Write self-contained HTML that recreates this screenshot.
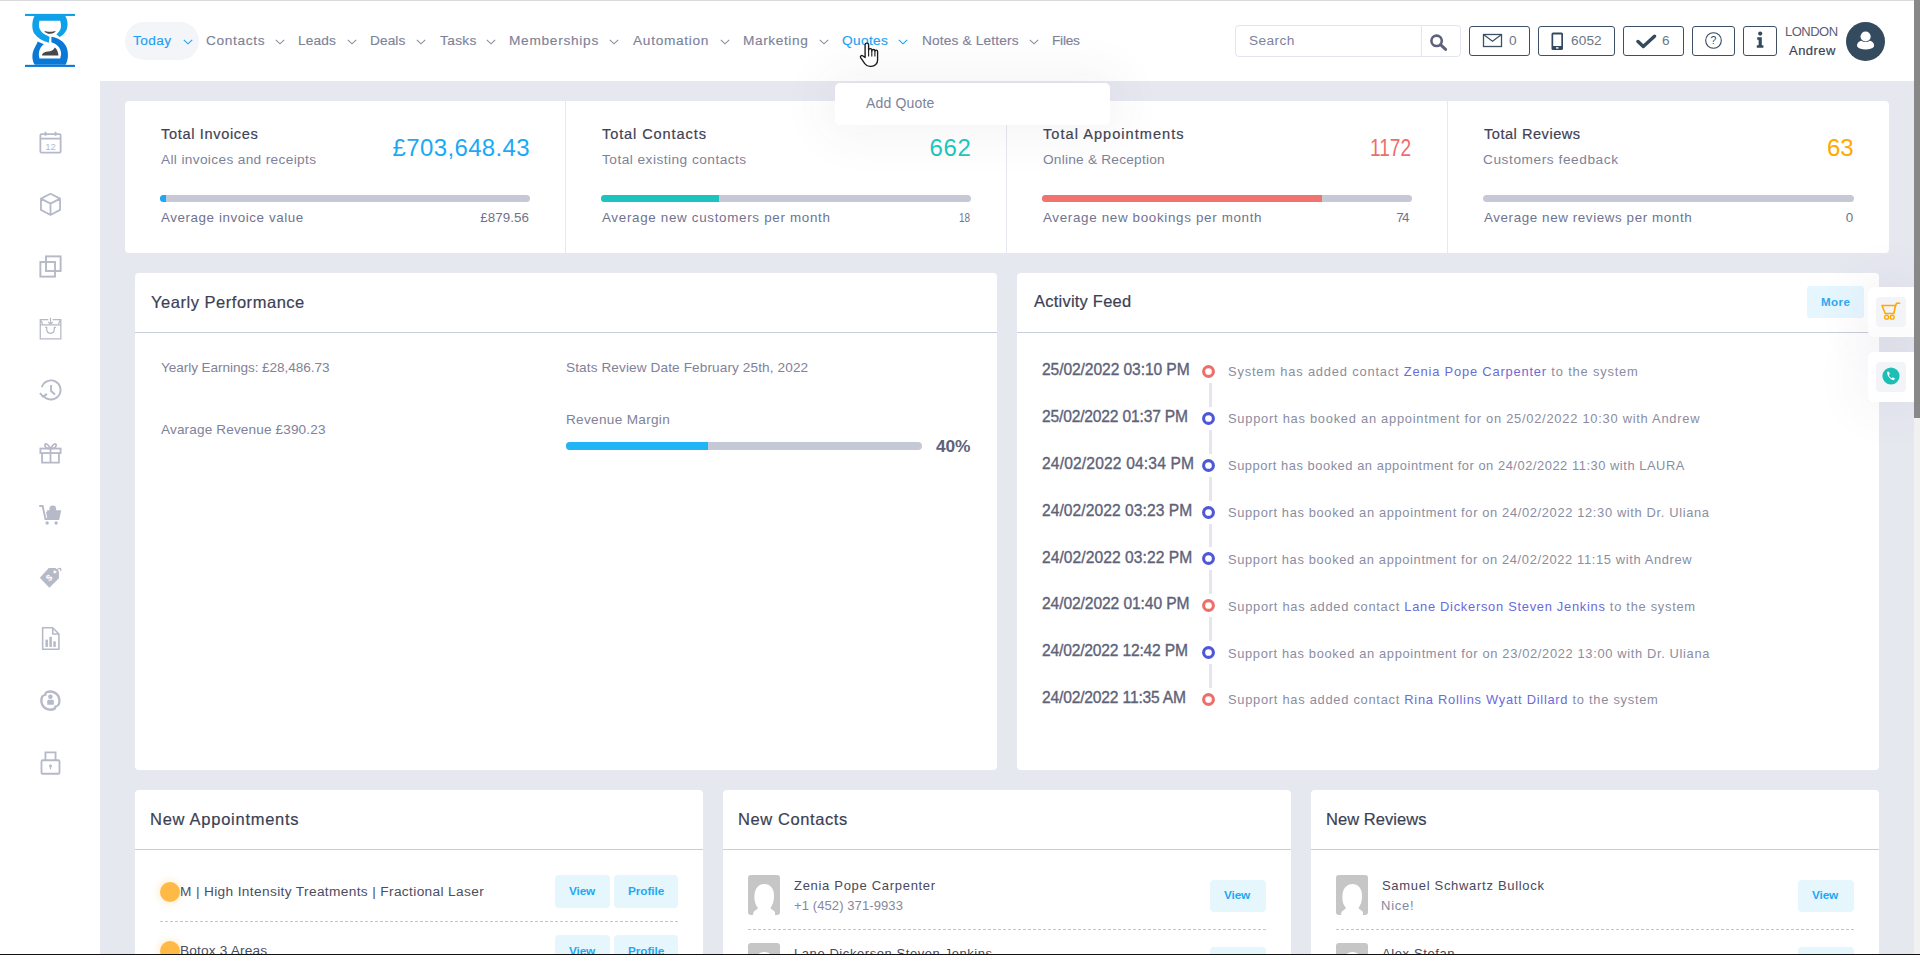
<!DOCTYPE html>
<html><head><meta charset="utf-8"><title>Dashboard</title>
<style>
*{box-sizing:border-box;margin:0;padding:0}
html,body{width:1920px;height:955px;overflow:hidden;background:#fff;font-family:"Liberation Sans",sans-serif;color:#3f4254}
.a{position:absolute}
.t{position:absolute;white-space:nowrap;line-height:1}
#topline{position:absolute;left:0;top:0;width:1920px;height:1px;background:#d8d9dc}
#sidebar{position:absolute;left:0;top:81px;width:100px;height:874px;background:#fff}
#content{position:absolute;left:100px;top:81px;width:1814px;height:874px;background:#e6e8f0}
.card{position:absolute;background:#fff;border-radius:4px}
.hb{top:26px;height:30px;border:1px solid #3d5066;border-radius:3px}
.bar{position:absolute;top:195px;height:7px;border-radius:3.5px;background:#c6c9d5;overflow:hidden}
.bar i{display:block;height:7px}
.hl{height:1px;background:#c9ccd9}
.dash{height:1px;background-image:linear-gradient(to right,#c3c6d1 60%,transparent 60%);background-size:5px 1px}
.odot{left:160px;width:20px;height:20px;border-radius:50%;background:#ffb946;box-shadow:0 0 5px 3px rgba(255,190,80,0.18)}
.btn{border-radius:4px;background:#e6f6fd}
.fl{left:1868px;width:46px;height:50px;background:#fff;border-radius:6px 0 0 6px;box-shadow:0 0 55px 0 rgba(82,63,105,0.11)}
.si{position:absolute;left:37px}
</style></head><body>
<div id="topline"></div>
<div id="sidebar"></div>
<div id="content"></div>
<!-- logo -->
<svg class="a" style="left:20px;top:10px" width="60" height="60" viewBox="0 0 955 955">
<rect x="80" y="62" width="795" height="33" fill="#0d9fe8"/>
<rect x="80" y="873" width="795" height="33" fill="#0a78d6"/>
<path d="M230 95 H720 C760 160 770 250 740 320 C710 380 660 420 630 430 L580 385 C640 340 660 290 650 220 L640 172 H310 L300 230 C300 320 360 380 440 410 L470 430 L460 520 C360 500 280 450 230 380 C180 300 190 170 230 95 Z" fill="#0ea0e9"/>
<path d="M725 873 H235 C195 810 185 720 215 640 C240 575 280 530 280 500 L380 545 C320 590 300 650 300 720 L310 770 H640 L655 700 C655 610 600 550 520 520 L500 515 L500 425 C610 440 700 500 740 590 C775 680 770 800 725 873 Z" fill="#0a78d6"/>
<path d="M385 335 C430 350 520 350 570 335 C560 360 520 380 480 380 C440 380 400 365 385 335 Z" fill="#48474c"/>
<path d="M350 725 C350 690 380 670 440 660 C500 652 530 640 555 595 C590 620 610 680 612 725 Z" fill="#48474c"/>
</svg>
<div class="a" style="left:125px;top:22px;width:74px;height:38px;border-radius:19px;background:#f3f5f9"></div>
<!-- chevrons -->
<svg class="a" style="left:182.7px;top:39px" width="10" height="6" viewBox="0 0 10 6"><path d="M0.8 0.8 L5 4.8 L9.2 0.8" fill="none" stroke="#1da1f2" stroke-width="1.1"/></svg>
<svg class="a" style="left:275.3px;top:39px" width="10" height="6" viewBox="0 0 10 6"><path d="M0.8 0.8 L5 4.8 L9.2 0.8" fill="none" stroke="#8a8da3" stroke-width="1.1"/></svg>
<svg class="a" style="left:346.7px;top:39px" width="10" height="6" viewBox="0 0 10 6"><path d="M0.8 0.8 L5 4.8 L9.2 0.8" fill="none" stroke="#8a8da3" stroke-width="1.1"/></svg>
<svg class="a" style="left:415.7px;top:39px" width="10" height="6" viewBox="0 0 10 6"><path d="M0.8 0.8 L5 4.8 L9.2 0.8" fill="none" stroke="#8a8da3" stroke-width="1.1"/></svg>
<svg class="a" style="left:486.3px;top:39px" width="10" height="6" viewBox="0 0 10 6"><path d="M0.8 0.8 L5 4.8 L9.2 0.8" fill="none" stroke="#8a8da3" stroke-width="1.1"/></svg>
<svg class="a" style="left:608.7px;top:39px" width="10" height="6" viewBox="0 0 10 6"><path d="M0.8 0.8 L5 4.8 L9.2 0.8" fill="none" stroke="#8a8da3" stroke-width="1.1"/></svg>
<svg class="a" style="left:719.5px;top:39px" width="10" height="6" viewBox="0 0 10 6"><path d="M0.8 0.8 L5 4.8 L9.2 0.8" fill="none" stroke="#8a8da3" stroke-width="1.1"/></svg>
<svg class="a" style="left:818.5px;top:39px" width="10" height="6" viewBox="0 0 10 6"><path d="M0.8 0.8 L5 4.8 L9.2 0.8" fill="none" stroke="#8a8da3" stroke-width="1.1"/></svg>
<svg class="a" style="left:897.7px;top:39px" width="10" height="6" viewBox="0 0 10 6"><path d="M0.8 0.8 L5 4.8 L9.2 0.8" fill="none" stroke="#1da1f2" stroke-width="1.1"/></svg>
<svg class="a" style="left:1028.7px;top:39px" width="10" height="6" viewBox="0 0 10 6"><path d="M0.8 0.8 L5 4.8 L9.2 0.8" fill="none" stroke="#8a8da3" stroke-width="1.1"/></svg>

<!-- search -->
<div class="a" style="left:1235px;top:25px;width:226px;height:32px;border:1px solid #e2e5ef;border-radius:4px"></div>
<div class="a" style="left:1421px;top:26px;width:1px;height:30px;background:#e2e5ef"></div>
<svg class="a" style="left:1428px;top:32px" width="20" height="20" viewBox="0 0 20 20"><circle cx="8.6" cy="8.8" r="5.2" fill="none" stroke="#5e6278" stroke-width="2.6"/><path d="M12.5 12.7 L17.6 17.4" stroke="#5e6278" stroke-width="3" stroke-linecap="round"/></svg>
<!-- header buttons -->
<div class="a hb" style="left:1469px;width:61px"></div>
<div class="a hb" style="left:1538px;width:77px"></div>
<div class="a hb" style="left:1623px;width:61px"></div>
<div class="a hb" style="left:1692px;width:43px"></div>
<div class="a hb" style="left:1743px;width:34px"></div>
<svg class="a" style="left:1482px;top:33px" width="21" height="15" viewBox="0 0 21 15"><rect x="1.5" y="1.5" width="18" height="12" fill="none" stroke="#3d5066" stroke-width="1.3"/><path d="M1.8 1.8 L10.5 8.2 L19.2 1.8" fill="none" stroke="#3d5066" stroke-width="1.3"/></svg>
<svg class="a" style="left:1551px;top:32px" width="13" height="19" viewBox="0 0 13 19"><rect x="0.5" y="0.5" width="11.5" height="17.5" rx="1.6" fill="#34495e"/><rect x="2.2" y="2.5" width="8.1" height="11.5" fill="#fff"/><rect x="5" y="15.2" width="2.5" height="1.4" fill="#fff"/></svg>
<svg class="a" style="left:1636px;top:34px" width="21" height="15" viewBox="0 0 21 15"><path d="M2 7.5 L7.3 12.4 L18.5 2.2" fill="none" stroke="#34495e" stroke-width="3.4" stroke-linejoin="round" stroke-linecap="round"/></svg>
<svg class="a" style="left:1704px;top:31px" width="19" height="19" viewBox="0 0 19 19"><circle cx="9.5" cy="9.5" r="7.8" fill="none" stroke="#34495e" stroke-width="1.1"/><text x="9.5" y="13.3" text-anchor="middle" font-family="Liberation Sans" font-size="10.5" fill="#34495e">?</text></svg>
<svg class="a" style="left:1755px;top:31px" width="10" height="18" viewBox="0 0 10 18"><circle cx="5.2" cy="2.6" r="2.1" fill="#34495e"/><path d="M2.2 6.2 H6.8 V14.2 H8.4 V16.8 H1.8 V14.2 H3.6 V8.8 H2.2 Z" fill="#34495e"/></svg>
<div class="a" style="left:1846px;top:22px;width:39px;height:39px;border-radius:50%;background:#344a5f"></div>
<svg class="a" style="left:1846px;top:22px" width="39" height="39" viewBox="0 0 39 39"><circle cx="19.6" cy="14.5" r="5.1" fill="#fff"/><path d="M11.2 24.4 C10.6 21.6 12.6 19.4 15.4 18.8 C17.4 20.4 21.8 20.4 23.8 18.8 C26.6 19.4 28.6 21.6 28 24.4 C26.4 26.6 23.2 27.4 19.6 27.4 C16 27.4 12.8 26.6 11.2 24.4 Z" fill="#fff"/></svg>
<!-- stat card -->
<div class="card" style="left:125px;top:101px;width:1764px;height:152px"></div>
<div class="a" style="left:565px;top:101px;width:1px;height:152px;background:#e6e8ef"></div>
<div class="a" style="left:1006px;top:101px;width:1px;height:152px;background:#e6e8ef"></div>
<div class="a" style="left:1447px;top:101px;width:1px;height:152px;background:#e6e8ef"></div>
<div class="bar" style="left:160px;width:370px"><i style="width:6px;background:#1ba9f5"></i></div>
<div class="bar" style="left:601px;width:370px"><i style="width:118px;background:#1bc5bd"></i></div>
<div class="bar" style="left:1042px;width:370px"><i style="width:280px;background:#f1736f"></i></div>
<div class="bar" style="left:1483px;width:371px"></div>
<!-- main cards -->
<div class="card" style="left:135px;top:273px;width:862px;height:497px"></div>
<div class="a hl" style="left:135px;top:332px;width:862px"></div>
<div class="a" style="left:566px;top:442px;width:356px;height:8px;border-radius:4px;background:#c5c9d5;overflow:hidden"><div style="width:142px;height:8px;background:#21b5f6"></div></div>
<div class="card" style="left:1017px;top:273px;width:862px;height:497px"></div>
<div class="a hl" style="left:1017px;top:332px;width:862px"></div>
<div class="a" style="left:1807px;top:286px;width:57px;height:32px;border-radius:3px;background:#e6f6fe"></div>
<svg class="a" style="left:1202px;top:365.00px" width="13" height="13" viewBox="0 0 13 13"><circle cx="6.5" cy="6.5" r="4.9" fill="none" stroke="#f06e6a" stroke-width="3.1"/></svg>
<div class="a" style="left:1209px;top:383.00px;width:3px;height:23.87px;background:#e4e6ef"></div>
<svg class="a" style="left:1202px;top:411.87px" width="13" height="13" viewBox="0 0 13 13"><circle cx="6.5" cy="6.5" r="4.9" fill="none" stroke="#4f57d9" stroke-width="3.1"/></svg>
<div class="a" style="left:1209px;top:429.87px;width:3px;height:23.87px;background:#e4e6ef"></div>
<svg class="a" style="left:1202px;top:458.74px" width="13" height="13" viewBox="0 0 13 13"><circle cx="6.5" cy="6.5" r="4.9" fill="none" stroke="#4f57d9" stroke-width="3.1"/></svg>
<div class="a" style="left:1209px;top:476.74px;width:3px;height:23.87px;background:#e4e6ef"></div>
<svg class="a" style="left:1202px;top:505.61px" width="13" height="13" viewBox="0 0 13 13"><circle cx="6.5" cy="6.5" r="4.9" fill="none" stroke="#4f57d9" stroke-width="3.1"/></svg>
<div class="a" style="left:1209px;top:523.61px;width:3px;height:23.87px;background:#e4e6ef"></div>
<svg class="a" style="left:1202px;top:552.48px" width="13" height="13" viewBox="0 0 13 13"><circle cx="6.5" cy="6.5" r="4.9" fill="none" stroke="#4f57d9" stroke-width="3.1"/></svg>
<div class="a" style="left:1209px;top:570.48px;width:3px;height:23.87px;background:#e4e6ef"></div>
<svg class="a" style="left:1202px;top:599.35px" width="13" height="13" viewBox="0 0 13 13"><circle cx="6.5" cy="6.5" r="4.9" fill="none" stroke="#f06e6a" stroke-width="3.1"/></svg>
<div class="a" style="left:1209px;top:617.35px;width:3px;height:23.87px;background:#e4e6ef"></div>
<svg class="a" style="left:1202px;top:646.22px" width="13" height="13" viewBox="0 0 13 13"><circle cx="6.5" cy="6.5" r="4.9" fill="none" stroke="#4f57d9" stroke-width="3.1"/></svg>
<div class="a" style="left:1209px;top:664.22px;width:3px;height:23.87px;background:#e4e6ef"></div>
<svg class="a" style="left:1202px;top:693.09px" width="13" height="13" viewBox="0 0 13 13"><circle cx="6.5" cy="6.5" r="4.9" fill="none" stroke="#f06e6a" stroke-width="3.1"/></svg>

<!-- bottom cards -->
<div class="card" style="left:135px;top:790px;width:568px;height:200px"></div>
<div class="a hl" style="left:135px;top:849px;width:568px"></div>
<div class="card" style="left:723px;top:790px;width:568px;height:200px"></div>
<div class="a hl" style="left:723px;top:849px;width:568px"></div>
<div class="card" style="left:1311px;top:790px;width:568px;height:200px"></div>
<div class="a hl" style="left:1311px;top:849px;width:568px"></div>
<div class="a dash" style="left:160px;top:921px;width:518px"></div>
<div class="a dash" style="left:748px;top:929px;width:518px"></div>
<div class="a dash" style="left:1336px;top:929px;width:518px"></div>
<div class="a odot" style="top:882px"></div>
<div class="a odot" style="top:941px"></div>
<div class="a btn" style="left:555px;top:875px;width:55px;height:33px"></div>
<div class="a btn" style="left:614px;top:875px;width:64px;height:33px"></div>
<div class="a btn" style="left:555px;top:935px;width:55px;height:33px"></div>
<div class="a btn" style="left:614px;top:935px;width:64px;height:33px"></div>
<div class="a btn" style="left:1210px;top:880px;width:56px;height:32px"></div>
<div class="a btn" style="left:1210px;top:947px;width:56px;height:32px"></div>
<div class="a btn" style="left:1798px;top:880px;width:56px;height:32px"></div>
<div class="a btn" style="left:1798px;top:947px;width:56px;height:32px"></div>
<svg class="a" style="left:748px;top:875px" width="32" height="40" viewBox="0 0 32 40"><rect width="32" height="40" rx="3" fill="#c6c6c6"/><path d="M5.5 37 C7 35 9.5 34.5 10 33 C7.5 30 6 26 6.5 20 C7 13 11 9 16.5 9 C22 9 25.8 13 26 20 C26.2 26 24.8 30 22.5 33 C23 34.5 25.5 35 27 37 L27 40 H5 Z" fill="#fff"/></svg>
<svg class="a" style="left:748px;top:943px" width="32" height="40" viewBox="0 0 32 40"><rect width="32" height="40" rx="3" fill="#c6c6c6"/><path d="M5.5 37 C7 35 9.5 34.5 10 33 C7.5 30 6 26 6.5 20 C7 13 11 9 16.5 9 C22 9 25.8 13 26 20 C26.2 26 24.8 30 22.5 33 C23 34.5 25.5 35 27 37 L27 40 H5 Z" fill="#fff"/></svg>
<svg class="a" style="left:1336px;top:875px" width="32" height="40" viewBox="0 0 32 40"><rect width="32" height="40" rx="3" fill="#c6c6c6"/><path d="M5.5 37 C7 35 9.5 34.5 10 33 C7.5 30 6 26 6.5 20 C7 13 11 9 16.5 9 C22 9 25.8 13 26 20 C26.2 26 24.8 30 22.5 33 C23 34.5 25.5 35 27 37 L27 40 H5 Z" fill="#fff"/></svg>
<svg class="a" style="left:1336px;top:943px" width="32" height="40" viewBox="0 0 32 40"><rect width="32" height="40" rx="3" fill="#c6c6c6"/><path d="M5.5 37 C7 35 9.5 34.5 10 33 C7.5 30 6 26 6.5 20 C7 13 11 9 16.5 9 C22 9 25.8 13 26 20 C26.2 26 24.8 30 22.5 33 C23 34.5 25.5 35 27 37 L27 40 H5 Z" fill="#fff"/></svg>

<!-- sidebar icons -->
<svg class="si" style="top:128.5px" width="27" height="27" viewBox="0 0 24 24"><rect x="3" y="4.5" width="18" height="16.5" rx="1" fill="none" stroke="#b6b9c7" stroke-width="1.6"/><path d="M3 8.5 H21 M7.5 2.5 V6 M16.5 2.5 V6" stroke="#b6b9c7" stroke-width="1.6"/><text x="12" y="18.3" text-anchor="middle" font-family="Liberation Sans" font-size="8.5" fill="#b6b9c7">12</text></svg>
<svg class="si" style="top:190.5px" width="27" height="27" viewBox="0 0 24 24"><path d="M12 2.5 L20.5 6.8 V16.8 L12 21.3 L3.5 16.8 V6.8 Z M3.5 6.8 L12 11.2 L20.5 6.8 M12 11.2 V21.3" fill="none" stroke="#b6b9c7" stroke-width="1.6" stroke-linejoin="round"/></svg>
<svg class="si" style="top:252.5px" width="27" height="27" viewBox="0 0 24 24"><rect x="8" y="3" width="13" height="13" fill="none" stroke="#b6b9c7" stroke-width="1.7"/><rect x="3" y="8" width="13" height="13" fill="none" stroke="#b6b9c7" stroke-width="1.7"/></svg>
<svg class="si" style="top:314.5px" width="27" height="27" viewBox="0 0 24 24"><path d="M10 4.1 H2.9 V21.3 H21.2 V4.1 H14 M2.9 8.7 H21.2 M3.6 5 L5 8 M20.5 5 L19.1 8" fill="none" stroke="#b6b9c7" stroke-width="1.1"/><path d="M12 2.4 V8.2 M10 6.2 L12 8.2 L14 6.2 M7.2 11 H8.6 V12.5 C8.6 17.5 15.4 17.5 15.4 12.5 V11 H16.8" fill="none" stroke="#b6b9c7" stroke-width="1.1"/></svg>
<svg class="si" style="top:376.5px" width="27" height="27" viewBox="0 0 24 24"><path d="M5.5 16.5 A8.5 8.5 0 1 0 4.3 9" fill="none" stroke="#b6b9c7" stroke-width="1.7"/><path d="M2.6 14.3 L5.5 17.5 L8.8 15" fill="none" stroke="#b6b9c7" stroke-width="1.7"/><path d="M12.5 7 V12.5 L16 15.5" fill="none" stroke="#b6b9c7" stroke-width="1.7"/></svg>
<svg class="si" style="top:438.5px" width="27" height="27" viewBox="0 0 24 24"><rect x="3" y="8.5" width="18" height="4" fill="none" stroke="#b6b9c7" stroke-width="1.6"/><path d="M4.5 12.5 V21 H19.5 V12.5 M12 8.5 V21" fill="none" stroke="#b6b9c7" stroke-width="1.6"/><path d="M12 8.5 C9 8.5 7 7.5 7 5.5 C7 3.5 9.5 3.5 12 8.5 C14.5 3.5 17 3.5 17 5.5 C17 7.5 15 8.5 12 8.5" fill="none" stroke="#b6b9c7" stroke-width="1.5"/></svg>
<svg class="si" style="top:500.5px" width="27" height="27" viewBox="0 0 24 24"><path d="M2 4.5 H5 L7.5 16 H19 L20.5 9 H9" fill="none" stroke="#b6b9c7" stroke-width="1.7"/><path d="M8 9.5 H20 L18.7 15 H9 Z" fill="#b6b9c7"/><circle cx="9" cy="19.5" r="1.5" fill="#b6b9c7"/><circle cx="17" cy="19.5" r="1.5" fill="#b6b9c7"/><circle cx="14" cy="7" r="3" fill="#b6b9c7"/></svg>
<svg class="si" style="top:562.5px" width="27" height="27" viewBox="0 0 24 24"><path d="M2.5 13 L10.5 4.5 H16.5 L19.5 7.5 V13.5 L11 22 Z" fill="#b6b9c7"/><circle cx="16" cy="7.8" r="1.4" fill="#fff"/><path d="M16.5 7.5 C19 4 22 4 21 7" fill="none" stroke="#b6b9c7" stroke-width="1.2"/><text x="10.5" y="16" text-anchor="middle" font-family="Liberation Sans" font-size="8" font-weight="700" fill="#fff" transform="rotate(-45 10.5 13)">$</text></svg>
<svg class="si" style="top:624.5px" width="27" height="27" viewBox="0 0 24 24"><path d="M5 2.5 H14 L19.5 8 V21.5 H5 Z M14 2.5 V8 H19.5" fill="none" stroke="#b6b9c7" stroke-width="1.4" stroke-linejoin="round"/><rect x="7.5" y="13" width="2.2" height="6.5" fill="#b6b9c7"/><rect x="11" y="10.5" width="2.2" height="9" fill="#b6b9c7"/><rect x="14.5" y="14.5" width="2.2" height="5" fill="#b6b9c7"/></svg>
<svg class="si" style="top:686.5px" width="27" height="27" viewBox="0 0 24 24"><path d="M7.25 5.47 A8.1 8.1 0 0 1 18.53 16.75 M16.55 18.73 A8.1 8.1 0 0 1 5.27 7.45" fill="none" stroke="#b6b9c7" stroke-width="2.1"/><path d="M4.2 8.6 L7.8 4.2 L8.6 7.6 Z M19.6 15.6 L16 20 L15.2 16.6 Z" fill="#b6b9c7"/><circle cx="11.9" cy="8.7" r="2" fill="#b6b9c7"/><path d="M9.1 15.7 V12.6 C9.1 11.8 9.8 11.3 10.6 11.3 H13.5 C14.3 11.3 15 11.8 15 12.6 V15.7 Z" fill="#b6b9c7"/></svg>
<svg class="si" style="top:748.5px" width="27" height="27" viewBox="0 0 24 24"><rect x="4" y="10" width="16" height="12" rx="1" fill="none" stroke="#b6b9c7" stroke-width="1.6"/><path d="M7.5 10 V3 H16.5 V10" fill="none" stroke="#b6b9c7" stroke-width="1.6"/><circle cx="12" cy="15" r="1.3" fill="#b6b9c7"/><path d="M12 15 V18" stroke="#b6b9c7" stroke-width="1.1"/></svg>

<!-- dropdown -->
<div class="a" style="left:835px;top:83px;width:275px;height:42px;border-radius:5px;background:#fff;box-shadow:0 0 50px 10px rgba(82,63,105,0.06)"></div>
<div class="t" id="t0" style="left:133.00px;top:33.56px;font-size:13.70px;font-weight:400;color:#1da1f2;letter-spacing:0.375px;-webkit-text-stroke:0.15px #1da1f2;">Today</div>
<div class="t" id="t1" style="left:206.00px;top:33.56px;font-size:13.70px;font-weight:400;color:#7e8299;letter-spacing:0.657px;-webkit-text-stroke:0.15px #7e8299;">Contacts</div>
<div class="t" id="t2" style="left:298.00px;top:33.56px;font-size:13.70px;font-weight:400;color:#7e8299;letter-spacing:0.125px;-webkit-text-stroke:0.15px #7e8299;">Leads</div>
<div class="t" id="t3" style="left:370.00px;top:33.56px;font-size:13.70px;font-weight:400;color:#7e8299;letter-spacing:0.075px;-webkit-text-stroke:0.15px #7e8299;">Deals</div>
<div class="t" id="t4" style="left:440.00px;top:33.56px;font-size:13.70px;font-weight:400;color:#7e8299;letter-spacing:0.350px;-webkit-text-stroke:0.15px #7e8299;">Tasks</div>
<div class="t" id="t5" style="left:509.00px;top:33.56px;font-size:13.70px;font-weight:400;color:#7e8299;letter-spacing:0.710px;-webkit-text-stroke:0.15px #7e8299;">Memberships</div>
<div class="t" id="t6" style="left:633.00px;top:33.56px;font-size:13.70px;font-weight:400;color:#7e8299;letter-spacing:0.694px;-webkit-text-stroke:0.15px #7e8299;">Automation</div>
<div class="t" id="t7" style="left:743.00px;top:33.56px;font-size:13.70px;font-weight:400;color:#7e8299;letter-spacing:0.587px;-webkit-text-stroke:0.15px #7e8299;">Marketing</div>
<div class="t" id="t8" style="left:842.00px;top:33.56px;font-size:13.70px;font-weight:400;color:#1da1f2;letter-spacing:0.340px;-webkit-text-stroke:0.15px #1da1f2;">Quotes</div>
<div class="t" id="t9" style="left:922.00px;top:33.56px;font-size:13.70px;font-weight:400;color:#7e8299;letter-spacing:0.154px;-webkit-text-stroke:0.15px #7e8299;">Notes &amp; Letters</div>
<div class="t" id="t10" style="left:1052.00px;top:33.56px;font-size:13.70px;font-weight:400;color:#7e8299;letter-spacing:-0.250px;-webkit-text-stroke:0.15px #7e8299;">Files</div>
<div class="t" id="t11" style="left:1249.00px;top:33.56px;font-size:13.70px;font-weight:400;color:#7e8299;letter-spacing:0.400px;">Search</div>
<div class="t" id="t12" style="left:1509.00px;top:33.64px;font-size:13.60px;font-weight:400;color:#6b7785;letter-spacing:-4.900px;">0</div>
<div class="t" id="t13" style="left:1571.00px;top:33.64px;font-size:13.60px;font-weight:400;color:#6b7785;letter-spacing:0.133px;">6052</div>
<div class="t" id="t14" style="left:1662.00px;top:33.64px;font-size:13.60px;font-weight:400;color:#6b7785;letter-spacing:-4.000px;">6</div>
<div class="t" id="t15" style="left:1785.00px;top:25.15px;font-size:13.00px;font-weight:400;color:#5d6076;letter-spacing:-0.520px;">LONDON</div>
<div class="t" id="t16" style="left:1789.00px;top:44.15px;font-size:13.00px;font-weight:400;color:#3f4254;letter-spacing:0.460px;-webkit-text-stroke:0.2px #3f4254;">Andrew</div>
<div class="t" id="t17" style="left:866.00px;top:96.30px;font-size:14.00px;font-weight:400;color:#7e8299;letter-spacing:0.163px;">Add Quote</div>
<div class="t" id="t18" style="left:161.00px;top:126.79px;font-size:14.60px;font-weight:400;color:#3f4254;letter-spacing:0.646px;-webkit-text-stroke:0.2px #3f4254;">Total Invoices</div>
<div class="t" id="t19" style="left:161.00px;top:152.55px;font-size:13.70px;font-weight:400;color:#7e8299;letter-spacing:0.342px;">All invoices and receipts</div>
<div class="t" id="t20" style="left:392.60px;top:135.80px;font-size:24.00px;font-weight:400;color:#1ba9f5;letter-spacing:0.360px;">£703,648.43</div>
<div class="t" id="t21" style="left:161.00px;top:210.81px;font-size:13.40px;font-weight:400;color:#6f7390;letter-spacing:0.570px;">Average invoice value</div>
<div class="t" id="t22" style="left:480.30px;top:210.81px;font-size:13.40px;font-weight:400;color:#6f7390;letter-spacing:0.050px;">£879.56</div>
<div class="t" id="t23" style="left:602.00px;top:126.79px;font-size:14.60px;font-weight:400;color:#3f4254;letter-spacing:0.885px;-webkit-text-stroke:0.2px #3f4254;">Total Contacts</div>
<div class="t" id="t24" style="left:602.00px;top:152.55px;font-size:13.70px;font-weight:400;color:#7e8299;letter-spacing:0.466px;">Total existing contacts</div>
<div class="t" id="t25" style="left:929.40px;top:135.80px;font-size:24.00px;font-weight:400;color:#1bc5bd;letter-spacing:0.700px;">662</div>
<div class="t" id="t26" style="left:602.00px;top:210.81px;font-size:13.40px;font-weight:400;color:#6f7390;letter-spacing:0.683px;">Average new customers per month</div>
<div class="t" id="t27" style="left:958.50px;top:210.81px;font-size:13.40px;font-weight:400;color:#6f7390;transform:scaleX(0.7403);transform-origin:0 0;">18</div>
<div class="t" id="t28" style="left:1043.00px;top:126.79px;font-size:14.60px;font-weight:400;color:#3f4254;letter-spacing:1.018px;-webkit-text-stroke:0.2px #3f4254;">Total Appointments</div>
<div class="t" id="t29" style="left:1043.00px;top:152.55px;font-size:13.70px;font-weight:400;color:#7e8299;letter-spacing:0.218px;">Online &amp; Reception</div>
<div class="t" id="t30" style="left:1370.00px;top:135.80px;font-size:24.00px;font-weight:400;color:#f06b6b;transform:scaleX(0.7964);transform-origin:0 0;">1172</div>
<div class="t" id="t31" style="left:1043.00px;top:210.81px;font-size:13.40px;font-weight:400;color:#6f7390;letter-spacing:0.664px;">Average new bookings per month</div>
<div class="t" id="t32" style="left:1396.30px;top:210.81px;font-size:13.40px;font-weight:400;color:#6f7390;letter-spacing:-1.700px;">74</div>
<div class="t" id="t33" style="left:1484.00px;top:126.79px;font-size:14.60px;font-weight:400;color:#3f4254;letter-spacing:0.508px;-webkit-text-stroke:0.2px #3f4254;">Total Reviews</div>
<div class="t" id="t34" style="left:1483.00px;top:152.55px;font-size:13.70px;font-weight:400;color:#7e8299;letter-spacing:0.559px;">Customers feedback</div>
<div class="t" id="t35" style="left:1827.00px;top:135.80px;font-size:24.00px;font-weight:400;color:#ffa800;letter-spacing:0.000px;">63</div>
<div class="t" id="t36" style="left:1484.00px;top:210.81px;font-size:13.40px;font-weight:400;color:#6f7390;letter-spacing:0.593px;">Average new reviews per month</div>
<div class="t" id="t37" style="left:1845.70px;top:210.81px;font-size:13.40px;font-weight:400;color:#6f7390;letter-spacing:-4.300px;">0</div>
<div class="t" id="t38" style="left:151.00px;top:293.68px;font-size:16.50px;font-weight:400;color:#3b3f55;letter-spacing:0.529px;-webkit-text-stroke:0.2px #3b3f55;">Yearly Performance</div>
<div class="t" id="t39" style="left:161.00px;top:360.94px;font-size:13.60px;font-weight:400;color:#7f8299;letter-spacing:-0.069px;">Yearly Earnings: £28,486.73</div>
<div class="t" id="t40" style="left:566.00px;top:361.04px;font-size:13.60px;font-weight:400;color:#7f8299;letter-spacing:0.114px;">Stats Review Date February 25th, 2022</div>
<div class="t" id="t41" style="left:161.00px;top:423.24px;font-size:13.60px;font-weight:400;color:#7f8299;letter-spacing:0.136px;">Avarage Revenue £390.23</div>
<div class="t" id="t42" style="left:566.00px;top:413.04px;font-size:13.60px;font-weight:400;color:#7f8299;letter-spacing:0.308px;">Revenue Margin</div>
<div class="t" id="t43" style="left:936.00px;top:438.31px;font-size:17.40px;font-weight:700;color:#5e6278;letter-spacing:-0.200px;">40%</div>
<div class="t" id="t44" style="left:1034.00px;top:293.08px;font-size:16.50px;font-weight:400;color:#3b3f55;letter-spacing:0.225px;-webkit-text-stroke:0.2px #3b3f55;">Activity Feed</div>
<div class="t" id="t45" style="left:1821.00px;top:296.44px;font-size:11.60px;font-weight:700;color:#2ea8f0;letter-spacing:0.433px;">More</div>
<div class="t" id="t46" style="left:1042.00px;top:362.14px;font-size:15.60px;font-weight:400;color:#5e6278;letter-spacing:-0.083px;-webkit-text-stroke:0.35px #5e6278;">25/02/2022 03:10 PM</div>
<div class="t" id="t47" style="left:1228.00px;top:366.33px;font-size:12.90px;font-weight:400;color:#8a8da1;letter-spacing:0.814px;">System has added contact <span style="color:#6a6bd8">Zenia Pope Carpenter</span> to the system</div>
<div class="t" id="t48" style="left:1042.00px;top:409.01px;font-size:15.60px;font-weight:400;color:#5e6278;letter-spacing:-0.172px;-webkit-text-stroke:0.35px #5e6278;">25/02/2022 01:37 PM</div>
<div class="t" id="t49" style="left:1228.00px;top:413.20px;font-size:12.90px;font-weight:400;color:#8a8da1;letter-spacing:0.737px;">Support has booked an appointment for on 25/02/2022 10:30 with Andrew</div>
<div class="t" id="t50" style="left:1042.00px;top:455.88px;font-size:15.60px;font-weight:400;color:#5e6278;letter-spacing:0.161px;-webkit-text-stroke:0.35px #5e6278;">24/02/2022 04:34 PM</div>
<div class="t" id="t51" style="left:1228.00px;top:460.07px;font-size:12.90px;font-weight:400;color:#8a8da1;letter-spacing:0.536px;">Support has booked an appointment for on 24/02/2022 11:30 with LAURA</div>
<div class="t" id="t52" style="left:1042.00px;top:502.75px;font-size:15.60px;font-weight:400;color:#5e6278;letter-spacing:0.061px;-webkit-text-stroke:0.35px #5e6278;">24/02/2022 03:23 PM</div>
<div class="t" id="t53" style="left:1228.00px;top:506.94px;font-size:12.90px;font-weight:400;color:#8a8da1;letter-spacing:0.638px;">Support has booked an appointment for on 24/02/2022 12:30 with Dr. Uliana</div>
<div class="t" id="t54" style="left:1042.00px;top:549.62px;font-size:15.60px;font-weight:400;color:#5e6278;letter-spacing:0.061px;-webkit-text-stroke:0.35px #5e6278;">24/02/2022 03:22 PM</div>
<div class="t" id="t55" style="left:1228.00px;top:553.81px;font-size:12.90px;font-weight:400;color:#8a8da1;letter-spacing:0.635px;">Support has booked an appointment for on 24/02/2022 11:15 with Andrew</div>
<div class="t" id="t56" style="left:1042.00px;top:596.49px;font-size:15.60px;font-weight:400;color:#5e6278;letter-spacing:-0.089px;-webkit-text-stroke:0.35px #5e6278;">24/02/2022 01:40 PM</div>
<div class="t" id="t57" style="left:1228.00px;top:600.68px;font-size:12.90px;font-weight:400;color:#8a8da1;letter-spacing:0.715px;">Support has added contact <span style="color:#6a6bd8">Lane Dickerson Steven Jenkins</span> to the system</div>
<div class="t" id="t58" style="left:1042.00px;top:643.36px;font-size:15.60px;font-weight:400;color:#5e6278;letter-spacing:-0.178px;-webkit-text-stroke:0.35px #5e6278;">24/02/2022 12:42 PM</div>
<div class="t" id="t59" style="left:1228.00px;top:647.55px;font-size:12.90px;font-weight:400;color:#8a8da1;letter-spacing:0.644px;">Support has booked an appointment for on 23/02/2022 13:00 with Dr. Uliana</div>
<div class="t" id="t60" style="left:1042.00px;top:690.23px;font-size:15.60px;font-weight:400;color:#5e6278;letter-spacing:-0.167px;-webkit-text-stroke:0.35px #5e6278;">24/02/2022 11:35 AM</div>
<div class="t" id="t61" style="left:1228.00px;top:694.42px;font-size:12.90px;font-weight:400;color:#8a8da1;letter-spacing:0.717px;">Support has added contact <span style="color:#6a6bd8">Rina Rollins Wyatt Dillard</span> to the system</div>
<div class="t" id="t62" style="left:150.00px;top:811.18px;font-size:16.50px;font-weight:400;color:#3b3f55;letter-spacing:0.733px;-webkit-text-stroke:0.2px #3b3f55;">New Appointments</div>
<div class="t" id="t63" style="left:738.00px;top:811.18px;font-size:16.50px;font-weight:400;color:#3b3f55;letter-spacing:0.591px;-webkit-text-stroke:0.2px #3b3f55;">New Contacts</div>
<div class="t" id="t64" style="left:1326.00px;top:811.18px;font-size:16.50px;font-weight:400;color:#3b3f55;letter-spacing:0.060px;-webkit-text-stroke:0.2px #3b3f55;">New Reviews</div>
<div class="t" id="t65" style="left:180.00px;top:884.56px;font-size:13.70px;font-weight:400;color:#4a4e62;letter-spacing:0.355px;">M | High Intensity Treatments | Fractional Laser</div>
<div class="t" id="t66" style="left:180.00px;top:944.15px;font-size:13.70px;font-weight:400;color:#4a4e62;letter-spacing:0.150px;">Botox 3 Areas</div>
<div class="t" id="t67" style="left:569.00px;top:886.17px;font-size:11.80px;font-weight:700;color:#1ba9f5;letter-spacing:-0.133px;">View</div>
<div class="t" id="t68" style="left:628.00px;top:886.17px;font-size:11.80px;font-weight:700;color:#1ba9f5;letter-spacing:-0.083px;">Profile</div>
<div class="t" id="t69" style="left:569.00px;top:946.47px;font-size:11.80px;font-weight:700;color:#1ba9f5;letter-spacing:-0.133px;">View</div>
<div class="t" id="t70" style="left:628.00px;top:946.47px;font-size:11.80px;font-weight:700;color:#1ba9f5;letter-spacing:-0.083px;">Profile</div>
<div class="t" id="t71" style="left:794.00px;top:879.05px;font-size:13.00px;font-weight:400;color:#464a5e;letter-spacing:0.695px;">Zenia Pope Carpenter</div>
<div class="t" id="t72" style="left:794.00px;top:898.85px;font-size:13.00px;font-weight:400;color:#85889c;letter-spacing:0.100px;">+1 (452) 371-9933</div>
<div class="t" id="t73" style="left:794.00px;top:947.25px;font-size:13.00px;font-weight:400;color:#464a5e;letter-spacing:0.571px;">Lane Dickerson Steven Jenkins</div>
<div class="t" id="t74" style="left:1382.00px;top:879.05px;font-size:13.00px;font-weight:400;color:#464a5e;letter-spacing:0.695px;">Samuel Schwartz Bullock</div>
<div class="t" id="t75" style="left:1381.00px;top:898.85px;font-size:13.00px;font-weight:400;color:#85889c;letter-spacing:0.750px;">Nice!</div>
<div class="t" id="t76" style="left:1382.00px;top:947.25px;font-size:13.00px;font-weight:400;color:#464a5e;letter-spacing:0.600px;">Alex Stefan</div>
<div class="t" id="t77" style="left:1224.00px;top:890.17px;font-size:11.80px;font-weight:700;color:#1ba9f5;letter-spacing:-0.133px;">View</div>
<div class="t" id="t78" style="left:1812.00px;top:890.17px;font-size:11.80px;font-weight:700;color:#1ba9f5;letter-spacing:-0.133px;">View</div>
<!-- floating -->
<div class="a fl" style="top:287px"></div>
<div class="a fl" style="top:352px"></div>
<div class="a" style="left:1876px;top:297px;width:30px;height:30px;border-radius:4px;background:#f3f4f8"></div>
<div class="a" style="left:1876px;top:362px;width:30px;height:30px;border-radius:4px;background:#f3f4f8"></div>
<svg class="a" style="left:1881px;top:302px" width="20" height="19" viewBox="0 0 20 19"><path d="M1 3.5 H14.5 L12.8 11.5 H4.2 Z" fill="none" stroke="#ffa800" stroke-width="1.6" stroke-linejoin="round"/><path d="M14.3 4 L15.6 1.3 H18.6" fill="none" stroke="#ffa800" stroke-width="1.6" stroke-linecap="round"/><circle cx="5.6" cy="15.2" r="1.9" fill="none" stroke="#ffa800" stroke-width="1.4"/><circle cx="11.2" cy="15.2" r="1.9" fill="none" stroke="#ffa800" stroke-width="1.4"/></svg>
<svg class="a" style="left:1882px;top:367px" width="18" height="18" viewBox="0 0 18 18"><circle cx="9" cy="9" r="8.6" fill="#1bbfb6"/><path d="M5.2 4.8 C4.6 7.8 7.4 12.2 11.8 13.3 L13 11.6 L10.9 10.3 L10 11.3 C8.4 10.6 7.3 9.3 6.8 7.9 L7.9 7.1 L6.9 4.8 Z" fill="#fff"/></svg>
<!-- scrollbar -->
<div class="a" style="left:1914px;top:0;width:6px;height:955px;background:#f1f1f1"></div>
<div class="a" style="left:1914px;top:0;width:6px;height:418px;background:#888"></div>
<div class="a" style="left:0;top:954px;width:1920px;height:1px;background:#111"></div>
<!-- cursor -->
<svg class="a" style="left:856px;top:40px" width="24" height="28" viewBox="0 0 24 28"><path d="M9.1 17.5 V4.8 C9.1 2.6 12.6 2.6 12.6 4.8 V10.2 C12.6 8 15.8 8 15.8 10.2 V11 C15.8 9 18.9 9 18.9 11 V11.6 C18.9 9.6 21.6 9.6 21.6 11.8 V20 C21.6 23.5 19 26.4 15 26.4 H13.8 C11.5 26.4 10 25.2 8.8 23.6 L4.6 17.6 C3.8 16.4 5.4 15 6.6 15.8 Z" fill="#fff" stroke="#1a1a1a" stroke-width="1.35" stroke-linejoin="round"/><path d="M12.6 10.2 V16.5 M15.8 11 V16.5 M18.9 11.6 V16.5" stroke="#1a1a1a" stroke-width="1.1"/></svg>
</body></html>
